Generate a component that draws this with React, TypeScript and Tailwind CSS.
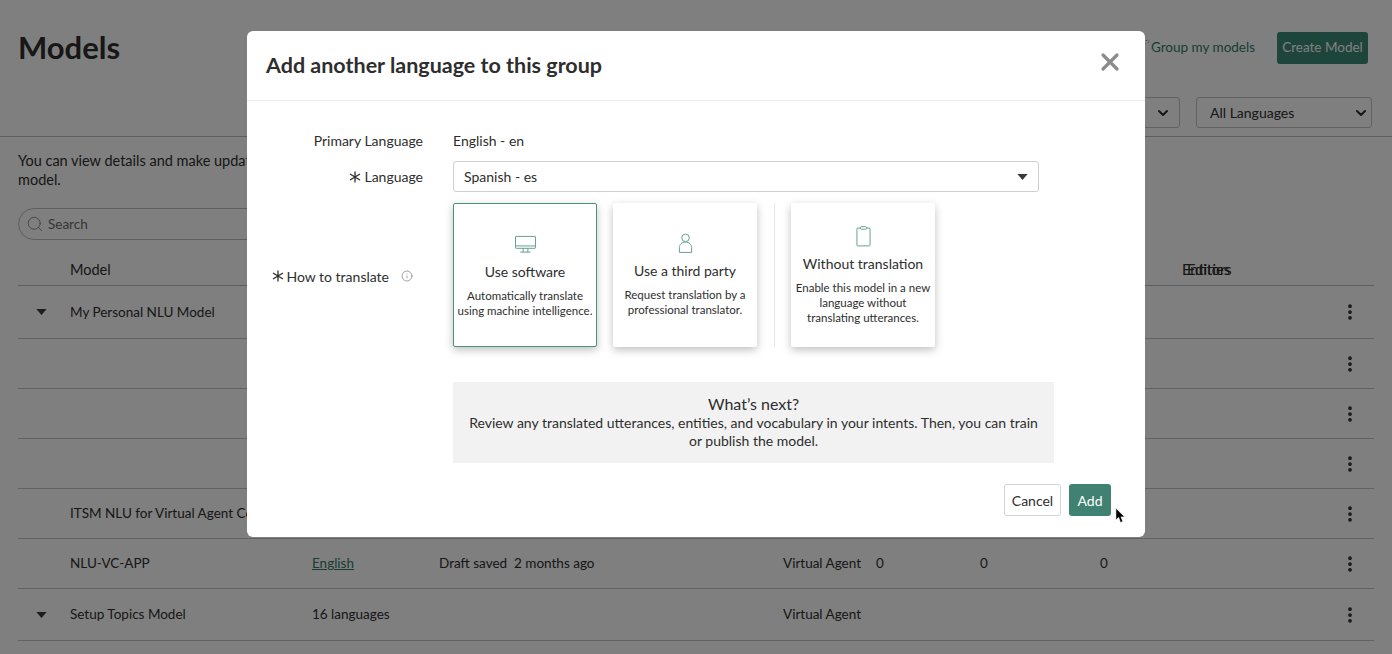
import React from 'react';
import { X, Search, ChevronDown, Info, EllipsisVertical } from 'lucide-react';

const font = { fontFamily: '"Lato", "Liberation Sans", sans-serif' };

const rows = [
  { h: 'h-[53px]', caret: true, name: 'My Personal NLU Model' },
  { h: 'h-[50px]' },
  { h: 'h-[50px]' },
  { h: 'h-[50px]' },
  { h: 'h-[50px]', name: 'ITSM NLU for Virtual Agent Copy1' },
  { h: 'h-[50px]', name: 'NLU-VC-APP', lang: 'English', link: true, status: 'Draft saved  2 months ago', app: 'Virtual Agent', a: '0', b: '0', c: '0' },
  { h: 'h-[52px]', caret: true, name: 'Setup Topics Model', lang: '16 languages', app: 'Virtual Agent' },
];

const Star = ({ className }: { className?: string }) => (
  <svg viewBox="0 0 12 12" className={className} fill="none" stroke="#2e2e2e" strokeWidth="1.3">
    <path d="M6 0.5V11.5M1 3L11 9M11 3L1 9" />
  </svg>
);

const Caret = () => (
  <svg viewBox="0 0 12 7" className="w-[11px] h-[6px]" fill="#3a3a3a">
    <path d="M0 0H12L6 7Z" />
  </svg>
);

const DesktopIcon = () => (
  <svg viewBox="0 0 24 20" className="w-[23px] h-[19px]" fill="none" stroke="#5f9c8d" strokeWidth="1">
    <rect x="1.5" y="1.5" width="21" height="12.5" rx="0.5" />
    <path d="M1.5 11.5H22.5M9.5 14V18M14.5 14V18M6.5 18H17.5" />
  </svg>
);

const PersonIcon = () => (
  <svg viewBox="0 0 16 22" className="w-[15px] h-[21px]" fill="none" stroke="#5f9c8d" strokeWidth="1">
    <circle cx="8" cy="5" r="4" />
    <path d="M1.5 20.5V15.5C1.5 12 4 9.5 8 9.5C12 9.5 14.5 12 14.5 15.5V20.5Z" />
  </svg>
);

const ClipIcon = () => (
  <svg viewBox="0 0 16 22" className="w-[15px] h-[21px]" fill="none" stroke="#5f9c8d" strokeWidth="1">
    <rect x="1" y="2" width="14" height="19" rx="1" />
    <path d="M4.5 2C4.5 1 5 0.5 6 0.5H10C11 0.5 11.5 1 11.5 2C11.5 3 11 3.2 10 3.2H6C5 3.2 4.5 3 4.5 2Z" fill="#fff" />
  </svg>
);

const Card = ({ icon, title, text, selected, raised }: { icon: React.ReactNode; title: string; text: string[]; selected?: boolean; raised?: boolean }) => (
  <div className={`w-[144px] h-[144px] bg-white rounded-[2px] flex flex-col items-center shadow-[0_3px_8px_rgba(0,0,0,0.25)] ${raised ? 'pt-[23px]' : 'pt-[30px]'} ${selected ? 'border border-[#4f8f7f]' : ''}`}>
    <div className="h-[21px] flex items-center justify-center">{icon}</div>
    <div className="mt-[7px] text-[14px] leading-[20px] text-[#2e2e2e]">{title}</div>
    <div className="mt-[6px] text-[11.5px] leading-[15px] text-[#2e2e2e] text-center whitespace-nowrap">
      {text.map(t => <div key={t}>{t}</div>)}
    </div>
  </div>
);

export default function App() {
  return (
    <div className="relative h-[654px] w-[1392px] overflow-hidden bg-white text-[#2e2e2e]" style={font}>
      <div className="flex items-center justify-between h-[97px] pl-[18px] pr-6">
        <h1 className="text-[31px] font-bold mb-[2px]">Models</h1>
        <div className="flex items-center mb-[2px]">
          <svg viewBox="0 0 14 14" className="w-[14px] h-[14px] mb-1" fill="none" stroke="#2f6f60" strokeWidth="1.5">
            <path d="M1 13L9 4" />
            <path d="M10 1L10.5 2M13 3L12 3.5M12.5 0.8L12 1.5" strokeWidth="0.8" />
          </svg>
          <span className="text-[13.5px] text-[#2f7a68] ml-px">Group my models</span>
          <button className="ml-[22px] w-[91px] h-[32px] rounded-[3px] bg-[#3d8a78] text-white text-[13.5px]">Create Model</button>
        </div>
      </div>
      <div className="flex justify-end pr-[20px] h-[40px] border-b border-[#bdbdbd]">
        <div className="w-[50px] h-[31px] mr-4 border border-[#c4c4c4] rounded-[3px] flex items-center justify-end pr-2">
          <ChevronDown className="w-4 h-4" strokeWidth={3} />
        </div>
        <div className="w-[176px] h-[31px] border border-[#c4c4c4] rounded-[3px] flex items-center justify-between pl-[13px] pr-[2px] text-[14px]">
          All Languages
          <ChevronDown className="w-4 h-4" strokeWidth={3} />
        </div>
      </div>

      <div className="px-[18px]">
        <p className="pt-[14px] text-[14.5px] leading-[19px]">
          You can view details and make updates to your models, or open a model to edit it.<br />model.
        </p>
        <div className="mt-[19px] h-[32px] w-[400px] border border-[#bdbdbd] rounded-full flex items-center pl-[7px] text-[13.5px] text-[#6b6b6b]">
          <Search className="w-[18px] h-[18px] text-[#8a8a8a]" strokeWidth={1.25} />
          <span className="ml-1">Search</span>
        </div>
        <div className="mt-[17px] h-[29px] border-b border-[#bdbdbd] relative flex items-start text-[14.5px] pl-[52px]">
          <span className="leading-[26px]">Model</span>
          <span className="ml-auto mr-[144px] leading-[26px]">Entities</span>
          <span className="absolute left-[1169px] leading-[26px]">Editors</span>
        </div>
        {rows.map((r, i) => (
          <div key={i} className={`${r.h} border-b border-[#c4c4c4] grid grid-cols-[52px_242px_127px_344px_93px_104px_120px_240px_1fr] items-center text-[13.5px]`}>
            <div className="pl-[18px]">{r.caret && <Caret />}</div>
            <div className="whitespace-nowrap">{r.name}</div>
            <div className={r.link ? 'text-[#2f7a68] underline' : ''}>{r.lang}</div>
            <div className="whitespace-pre">{r.status}</div>
            <div>{r.app}</div>
            <div>{r.a}</div>
            <div>{r.b}</div>
            <div>{r.c}</div>
            <div className="flex justify-end pr-[20px]">
              <EllipsisVertical className="w-5 h-5" strokeWidth={2.5} />
            </div>
          </div>
        ))}
      </div>

      <div className="absolute inset-0 bg-black/50" />

      <div className="absolute left-[247px] top-[31px] w-[898px] h-[506px] bg-white rounded-[6px]">
        <div className="h-[70px] border-b border-[#ececec] flex items-center justify-between pl-[19px] pr-[21px]">
          <h2 className="text-[21.5px] font-bold text-[#2e2e2e]">Add another language to this group</h2>
          <X className="w-[28px] h-[28px] text-[#8c8c8c] -mt-2" strokeWidth={2.75} />
        </div>
        <div className="grid grid-cols-[176px_1fr] gap-x-[30px] text-[14px] text-[#2e2e2e]">
          <div className="text-right mt-[30px] leading-[20px]">Primary Language</div>
          <div className="mt-[30px] leading-[20px]">English - en</div>

          <div className="mt-[10px] h-[31px] flex items-center justify-end gap-[3px]">
            <Star className="w-[12px] h-[12px]" />
            Language
          </div>
          <div className="mt-[10px] w-[586px] h-[31px] border border-[#cfcfcf] rounded-[3px] flex items-center justify-between pl-[10px] pr-[10px]">
            Spanish - es
            <Caret />
          </div>

          <div className="flex items-center justify-end mt-[11px] pr-[10px] gap-[3px] -mb-[2px]">
            <Star className="w-[12px] h-[12px]" />
            How to translate
            <Info className="w-[12px] h-[12px] ml-[9px] text-[#6b6b6b]" strokeWidth={1.25} />
          </div>
          <div className="mt-[11px] flex">
            <Card selected icon={<DesktopIcon />} title="Use software" text={['Automatically translate', 'using machine intelligence.']} />
            <div className="ml-4">
              <Card icon={<PersonIcon />} title="Use a third party" text={['Request translation by a', 'professional translator.']} />
            </div>
            <div className="ml-[17px] w-px bg-[#e6e6e6]" />
            <div className="ml-4">
              <Card raised icon={<ClipIcon />} title="Without translation" text={['Enable this model in a new', 'language without', 'translating utterances.']} />
            </div>
          </div>

          <div className="col-start-2 mt-[35px] w-[601px] h-[81px] bg-[#f2f2f2] text-center pt-[12px] px-4 leading-[18px]">
            <div className="text-[16px] leading-[20px]">What’s next?</div>
            <div>Review any translated utterances, entities, and vocabulary in your intents. Then, you can train or publish the model.</div>
          </div>
        </div>
        <div className="flex justify-end gap-2 mt-[21px] pr-[34px] text-[14px]">
          <button className="w-[57px] h-[32px] border border-[#d4d4d4] rounded-[3px] text-[#2e2e2e]">Cancel</button>
          <button className="w-[42px] h-[32px] rounded-[3px] bg-[#3f8271] text-white">Add</button>
        </div>
      </div>

      <svg viewBox="0 0 12 18" className="absolute left-[1115px] top-[507px] w-[11px] h-[17px]" fill="#000" stroke="#fff" strokeWidth="0.6">
        <path d="M1 1L1 14L4 11L6 16.5L8.5 15.5L6.5 10.5L10.5 10.5Z" />
      </svg>
    </div>
  );
}
